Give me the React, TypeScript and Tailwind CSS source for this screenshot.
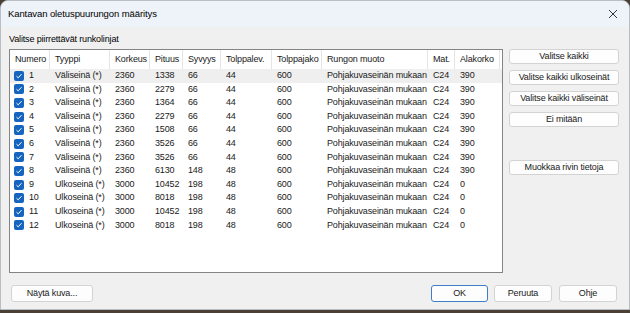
import React from 'react';

const font = { fontFamily: '"Liberation Sans", Arial, sans-serif' };

const columns = [
  { label: 'Numero', w: 'w-[40px]' },
  { label: 'Tyyppi', w: 'w-[60px]' },
  { label: 'Korkeus', w: 'w-[40px]' },
  { label: 'Pituus', w: 'w-[33px]' },
  { label: 'Syvyys', w: 'w-[38px]' },
  { label: 'Tolppalev.', w: 'w-[51px]' },
  { label: 'Tolppajako', w: 'w-[50px]' },
  { label: 'Rungon muoto', w: 'w-[106px]' },
  { label: 'Mat.', w: 'w-[27px]' },
  { label: 'Alakorko', w: 'w-[45px]' },
];

const rows = [
  ['1', 'Väliseinä (*)', '2360', '1338', '66', '44', '600', '390'],
  ['2', 'Väliseinä (*)', '2360', '2279', '66', '44', '600', '390'],
  ['3', 'Väliseinä (*)', '2360', '1364', '66', '44', '600', '390'],
  ['4', 'Väliseinä (*)', '2360', '2279', '66', '44', '600', '390'],
  ['5', 'Väliseinä (*)', '2360', '1508', '66', '44', '600', '390'],
  ['6', 'Väliseinä (*)', '2360', '3526', '66', '44', '600', '390'],
  ['7', 'Väliseinä (*)', '2360', '3526', '66', '44', '600', '390'],
  ['8', 'Väliseinä (*)', '2360', '6130', '148', '48', '600', '390'],
  ['9', 'Ulkoseinä (*)', '3000', '10452', '198', '48', '600', '0'],
  ['10', 'Ulkoseinä (*)', '3000', '8018', '198', '48', '600', '0'],
  ['11', 'Ulkoseinä (*)', '3000', '10452', '198', '48', '600', '0'],
  ['12', 'Ulkoseinä (*)', '3000', '8018', '198', '48', '600', '0'],
];

const Check = () => (
  <span className="w-[10px] h-[10px] rounded-[2px] bg-[#1565c0] flex items-center justify-center shrink-0">
    <svg width="8" height="8" viewBox="0 0 8 8">
      <path d="M1.5 4.2 L3.2 5.8 L6.5 2.2" stroke="white" strokeWidth="1" fill="none" />
    </svg>
  </span>
);

const SideButton = ({ children }: { children: React.ReactNode }) => (
  <button className="h-[15px] w-full rounded-[3px] border border-[#d3d3d3] bg-[#fdfdfd] text-[9px] tracking-[-0.15px] whitespace-nowrap text-[#1a1a1a] flex items-center justify-center">
    {children}
  </button>
);

export default function App() {
  return (
    <div className="w-[630px] h-[313px] bg-[#4a4036] overflow-hidden" style={font}>
      <div className="h-[310px] rounded-t-[8px] border border-[#b9bdc4] bg-[#f0f0f0] flex flex-col overflow-hidden">
        <div className="h-[26px] bg-[#eef3f9] flex items-center justify-between pl-[7px] pr-[11px] shrink-0">
          <span className="text-[9.5px] tracking-[-0.1px] text-black whitespace-nowrap">Kantavan oletuspuurungon määritys</span>
          <svg width="10" height="10" viewBox="0 0 10 10">
            <path d="M1 1 L9 9 M9 1 L1 9" stroke="#333" strokeWidth="1" />
          </svg>
        </div>
        <div className="flex flex-col pl-[8px] pr-[10px] text-[9px] tracking-[-0.15px] whitespace-nowrap">
          <div className="h-[14px] mt-[6px] flex items-center text-black">
            Valitse piirrettävät runkolinjat
          </div>
          <div className="flex mt-[2px]">
            <div className="w-[494px] h-[224px] border border-[#848484] bg-white overflow-hidden">
              <div className="flex h-[19px] text-[#1a1a1a]">
                {columns.map((c) => (
                  <div key={c.label} className={`${c.w} h-full shrink-0 border-r border-[#e5e5e5] flex items-center pl-[5px]`}>
                    {c.label}
                  </div>
                ))}
              </div>
              {rows.map((r, i) => (
                <div
                  key={r[0]}
                  className={`flex h-[13.6px] text-[#1a1a1a] items-center ${i === 0 ? 'bg-[#efefef]' : ''}`}
                >
                  <div className="w-[40px] shrink-0 flex items-center gap-[5px] pl-[4px]">
                    <Check />
                    <span>{r[0]}</span>
                  </div>
                  <div className="w-[60px] shrink-0 pl-[5px]">{r[1]}</div>
                  <div className="w-[40px] shrink-0 pl-[5px]">{r[2]}</div>
                  <div className="w-[33px] shrink-0 pl-[5px]">{r[3]}</div>
                  <div className="w-[38px] shrink-0 pl-[5px]">{r[4]}</div>
                  <div className="w-[51px] shrink-0 pl-[5px]">{r[5]}</div>
                  <div className="w-[50px] shrink-0 pl-[5px]">{r[6]}</div>
                  <div className="w-[106px] shrink-0 pl-[5px]">Pohjakuvaseinän mukaan</div>
                  <div className="w-[27px] shrink-0 pl-[5px]">C24</div>
                  <div className="w-[45px] shrink-0 pl-[5px]">{r[7]}</div>
                </div>
              ))}
            </div>
            <div className="w-[110px] ml-[6px] flex flex-col gap-[6px]">
              <SideButton>Valitse kaikki</SideButton>
              <SideButton>Valitse kaikki ulkoseinät</SideButton>
              <SideButton>Valitse kaikki väliseinät</SideButton>
              <SideButton>Ei mitään</SideButton>
              <div className="mt-[27px]">
                <SideButton>Muokkaa rivin tietoja</SideButton>
              </div>
            </div>
          </div>
          <div className="flex items-center mt-[12px] text-[#1a1a1a]">
            <button className="h-[17px] w-[82px] ml-[2px] rounded-[3px] border border-[#d3d3d3] bg-[#fdfdfd] flex items-center justify-center">
              Näytä kuva...
            </button>
            <div className="flex-1" />
            <button className="h-[17px] w-[57px] rounded-[3px] border border-[#3c7fc8] bg-[#fdfdfd] flex items-center justify-center">
              OK
            </button>
            <button className="h-[17px] w-[58px] ml-[6px] rounded-[3px] border border-[#d3d3d3] bg-[#fdfdfd] flex items-center justify-center">
              Peruuta
            </button>
            <button className="h-[17px] w-[58px] ml-[7px] mr-[2px] rounded-[3px] border border-[#d3d3d3] bg-[#fdfdfd] flex items-center justify-center">
              Ohje
            </button>
          </div>
        </div>
      </div>
    </div>
  );
}
